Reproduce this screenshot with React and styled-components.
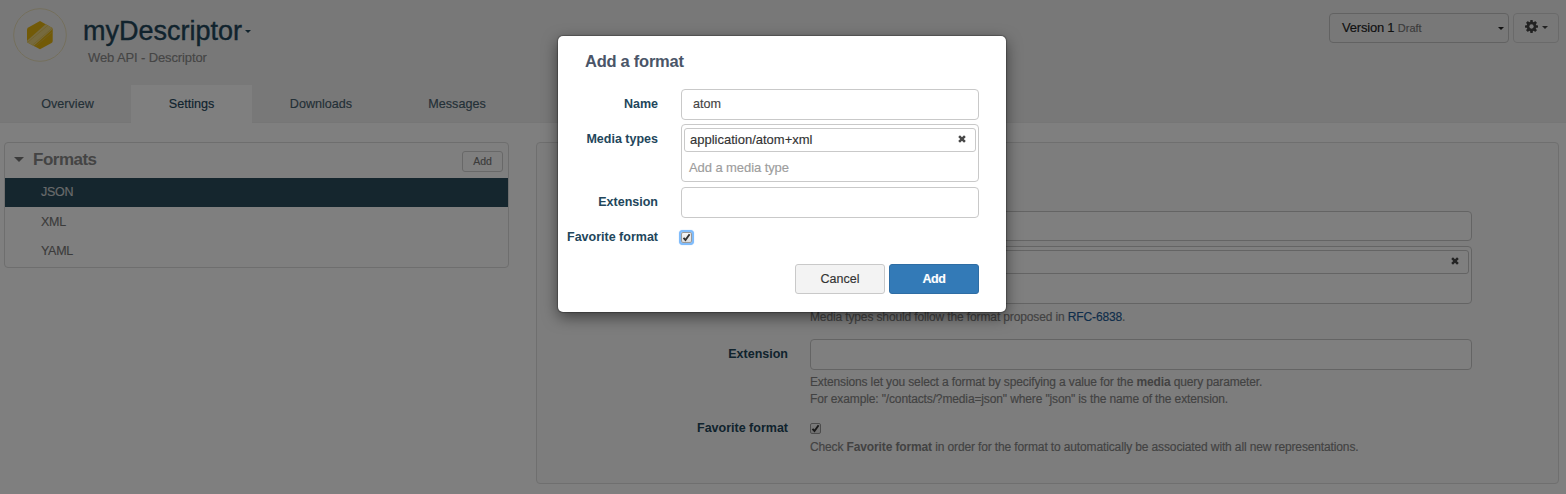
import React from "react";
import styled, { createGlobalStyle, css } from "styled-components";

const GlobalStyle = createGlobalStyle`
  *, *::before, *::after { box-sizing: border-box; }
  html, body { margin: 0; padding: 0; }
  body {
    width: 100%;
    height: 494px;
    overflow: hidden;
    background: #fff;
    color: #333;
    font-family: "Liberation Sans", Arial, sans-serif;
    font-size: 13px;
    line-height: 17px;
    -webkit-text-stroke: 0.15px;
  }
  b, h2, h3, label { -webkit-text-stroke: 0; }
  input, button { font-family: inherit; font-size: inherit; }
`;

const Page = styled.div`
  position: relative;
  height: 494px;
  overflow: hidden;
`;

const Header = styled.header`
  display: flex;
  flex-direction: column;
  justify-content: space-between;
  height: 123px;
  background: #f1f1f1;
  box-shadow: inset 0 -1px 0 #ededed;
`;

const HeaderTop = styled.div`
  display: flex;
  justify-content: space-between;
  padding: 8px 7px 0 13px;
`;

const Brand = styled.div`
  display: flex;
  gap: 16px;
`;

const TitleBlock = styled.div`
  padding-top: 7px;
`;

const Title = styled.h1`
  display: flex;
  align-items: center;
  gap: 3px;
  margin: 0;
  color: #22465b;
  font-size: 27px;
  font-weight: 400;
  line-height: 32px;
  -webkit-text-stroke: 0.4px;
`;

const Subtitle = styled.div`
  margin: 2px 0 0 5px;
  color: #8a8a8a;
  letter-spacing: -0.12px;
`;

const Caret = styled.span`
  width: 0;
  height: 0;
  border: ${(p) => p.$size || 3}px solid transparent;
  border-top-color: ${(p) => p.$color || "#222"};
  border-bottom: 0;
`;

const Actions = styled.div`
  display: flex;
  gap: 4px;
  padding-top: 5px;
`;

const VersionSelect = styled.div`
  display: flex;
  align-items: center;
  justify-content: space-between;
  width: 180px;
  height: 30px;
  padding: 0 4px 0 12px;
  border: 1px solid #c4c4c4;
  border-radius: 4px;
  color: #222;
  letter-spacing: -0.2px;
  small { color: #777; font-size: 11px; letter-spacing: 0; }
`;

const GearButton = styled.div`
  display: flex;
  align-items: center;
  gap: 4px;
  width: 46px;
  height: 30px;
  padding: 0 0 1px 11px;
  border: 1px solid #d4d4d4;
  border-radius: 4px;
  svg { margin-top: -2px; }
`;

const Tabs = styled.nav`
  display: flex;
  padding-left: 4px;
`;

const Tab = styled.a`
  width: ${(p) => p.$width}px;
  height: 38px;
  background: ${(p) => (p.$active ? "#fff" : "transparent")};
  color: ${(p) => (p.$active ? "#22465b" : "#47606e")};
  font-size: 12.6px;
  line-height: 39px;
  text-align: center;
`;

const Body = styled.main`
  display: flex;
  align-items: flex-start;
  gap: 27px;
  padding: 19px 7px 0 4px;
`;

const Panel = styled.section`
  width: 505px;
  height: 126px;
  border: 1px solid #dcdcdc;
  border-radius: 4px;
`;

const PanelHeader = styled.div`
  display: flex;
  align-items: center;
  gap: 9px;
  height: 35px;
  padding: 0 5px 2px 9px;
`;

const PanelTitle = styled.h2`
  flex: 1;
  margin: 0;
  color: #888;
  font-size: 17px;
  line-height: 20px;
  letter-spacing: -0.5px;
`;

const SmallButton = styled.button`
  width: 41px;
  height: 21px;
  margin-top: 3px;
  padding: 1px 0 0;
  border: 1px solid #d0d0d0;
  border-radius: 3px;
  background: #fff;
  color: #777;
  font-size: 10.5px;
  line-height: 17px;
`;

const FormatRow = styled.div`
  height: 29px;
  padding-left: 36px;
  background: ${(p) => (p.$selected ? "#2b4c5c" : "transparent")};
  color: ${(p) => (p.$selected ? "#d0d4d6" : "#777")};
  font-size: 12.5px;
  letter-spacing: -0.3px;
  line-height: ${(p) => (p.$selected ? 28 : 30)}px;
`;

const Details = styled.section`
  flex: 1;
  height: 342px;
  padding: 68px 86px 0 0;
  border: 1px solid #dedede;
  border-radius: 4px;
  background: #fafafa;
`;

const Field = styled.div`
  display: grid;
  grid-template-columns: ${(p) => p.$label}px 1fr;
  column-gap: ${(p) => p.$gap}px;
  margin-bottom: ${(p) => p.$after}px;
`;

const Label = styled.label`
  padding-top: ${(p) => p.$top ?? 7}px;
  color: #22465b;
  font-size: 12.5px;
  font-weight: 700;
  text-align: right;
`;

const boxed = css`
  border: 1px solid #c9c9c9;
  border-radius: 4px;
  background: #fff;
`;

const Input = styled.input`
  ${boxed}
  display: block;
  width: 100%;
  height: ${(p) => p.$height || 31}px;
  padding: 0 11px 2px;
  color: #444;
  outline: none;
  font-size: 12.6px;
`;

const TagBox = styled.div`
  ${boxed}
  height: 58px;
  padding: 3px 2px;
`;

const Tag = styled.div`
  ${boxed}
  display: flex;
  align-items: center;
  justify-content: space-between;
  height: 24px;
  padding: 0 9.5px 1px 5px;
  border-radius: 3px;
  color: #333;
  svg { margin-top: -2px; }
`;

const Placeholder = styled.div`
  padding: 7px 5px 0;
  color: #9d9d9d;
  letter-spacing: -0.08px;
`;

const Help = styled.p`
  margin: ${(p) => p.$top ?? 5}px 0 0;
  color: #858585;
  font-size: 12px;
  white-space: nowrap;
  letter-spacing: -0.13px;
  a { color: #1c5a96; }
`;

const CheckFace = styled.span`
  display: block;
  width: 11px;
  height: 11px;
  border: 1px solid #999;
  border-radius: 2px;
  background: linear-gradient(#f6f6f6, #dedede);
  box-shadow: ${(p) => (p.$focused ? "0 0 0 2px #80bcfb, 0 0 1px 2px #80bcfb" : "none")};
  margin: ${(p) => p.$margin};
  svg { display: block; overflow: visible; }
`;

const Backdrop = styled.div`
  position: absolute;
  inset: 0;
  display: flex;
  justify-content: center;
  align-items: flex-start;
  padding: 36px 2px 0 0;
  background: rgba(0, 0, 0, 0.5);
`;

const Dialog = styled.div`
  width: 448px;
  height: 276px;
  padding: 15px 27px 0 0;
  border-radius: 5px;
  background: #fff;
  box-shadow: 0 5px 15px rgba(0, 0, 0, 0.5), 0 0 1px 1px rgba(0, 0, 0, 0.25);
`;

const DialogTitle = styled.h3`
  margin: 0 0 17px 27px;
  color: #4a5568;
  font-size: 16.5px;
  line-height: 21px;
  letter-spacing: -0.26px;
`;

const DialogFooter = styled.div`
  display: flex;
  justify-content: flex-end;
  gap: 4px;
  margin-top: 18px;
`;

const Button = styled.button`
  width: 90px;
  height: 30px;
  padding: 0 0 1px;
  border: 1px solid ${(p) => (p.$primary ? "#2e6da4" : "#c9c9c9")};
  border-radius: 3px;
  background: ${(p) => (p.$primary ? "#337ab7" : "#f3f3f3")};
  color: ${(p) => (p.$primary ? "#fff" : "#333")};
  font-size: 12.5px;
  font-weight: ${(p) => (p.$primary ? 700 : 400)};
  letter-spacing: ${(p) => (p.$primary ? -0.4 : 0)}px;
`;

function Logo() {
  return (
    <svg width="54" height="54" viewBox="0 0 54 54">
      <defs>
        <clipPath id="hex">
          <path d="M27 13 38.5 19.4Q39.7 20.2 39.7 21.5V33Q39.7 34.3 38.5 35L27 41.3 15.3 35Q14 34.3 14 33V21.5Q14 20.2 15.3 19.4Z" />
        </clipPath>
      </defs>
      <circle cx="27" cy="27" r="26.3" fill="none" stroke="#e9dfb9" />
      <g clipPath="url(#hex)">
        <rect x="13" y="12" width="28" height="31" fill="#e5b40f" />
        <path d="M8 38 38 11.5 43 18 15 43Z" fill="#ecd57c" />
        <path d="M12 36.5 42 11.5M15 41 43 17M19 41 43 21" stroke="#e3c04c" strokeWidth=".7" />
      </g>
    </svg>
  );
}

function Gear() {
  return (
    <svg width="13" height="13" viewBox="0 0 12 12">
      <g fill="#444">
        {[0, 45, 90, 135].map((a) => (
          <rect key={a} x="4.8" y="0" width="2.4" height="12" rx=".4" transform={`rotate(${a} 6 6)`} />
        ))}
        <circle cx="6" cy="6" r="4.5" />
      </g>
      <circle cx="6" cy="6" r="2" fill="#f1f1f1" />
    </svg>
  );
}

function Cross() {
  return (
    <svg width="8" height="8" viewBox="0 0 8 8">
      <path d="M1.1 1.1 6.9 6.9M6.9 1.1 1.1 6.9" stroke="#484848" strokeWidth="2.5" />
    </svg>
  );
}

function Checked({ focused, margin }) {
  return (
    <CheckFace $focused={focused} $margin={margin} role="checkbox" aria-checked="true">
      <svg width="9" height="9" viewBox="0 0 9 9">
        <path d="M1.5 4.8 3.5 7 7.6 1.2" fill="none" stroke="#333" strokeWidth="1.9" />
      </svg>
    </CheckFace>
  );
}

const tabs = [
  { name: "Overview", width: 127 },
  { name: "Settings", width: 121, active: true },
  { name: "Downloads", width: 138 },
  { name: "Messages", width: 134 },
];

export default function App() {
  return (
    <Page>
      <GlobalStyle />
      <Header>
        <HeaderTop>
          <Brand>
            <Logo />
            <TitleBlock>
              <Title>
                myDescriptor
                <Caret $color="#22465b" />
              </Title>
              <Subtitle>Web API - Descriptor</Subtitle>
            </TitleBlock>
          </Brand>
          <Actions>
            <VersionSelect>
              <span>
                Version 1 <small>Draft</small>
              </span>
              <Caret />
            </VersionSelect>
            <GearButton>
              <Gear />
              <Caret $color="#444" />
            </GearButton>
          </Actions>
        </HeaderTop>
        <Tabs>
          {tabs.map((t) => (
            <Tab key={t.name} $width={t.width} $active={t.active}>
              {t.name}
            </Tab>
          ))}
        </Tabs>
      </Header>
      <Body>
        <Panel>
          <PanelHeader>
            <Caret $size={5} $color="#777" />
            <PanelTitle>Formats</PanelTitle>
            <SmallButton>Add</SmallButton>
          </PanelHeader>
          <FormatRow $selected>JSON</FormatRow>
          <FormatRow>XML</FormatRow>
          <FormatRow>YAML</FormatRow>
        </Panel>
        <Details>
          <Field $label={251} $gap={22} $after={5}>
            <Label>Name</Label>
            <Input $height={30} readOnly />
          </Field>
          <Field $label={251} $gap={22} $after={13}>
            <Label>Media types</Label>
            <div>
              <TagBox>
                <Tag>
                  <span />
                  <Cross />
                </Tag>
              </TagBox>
              <Help>
                Media types should follow the format proposed in <a>RFC-6838</a>.
              </Help>
            </div>
          </Field>
          <Field $label={251} $gap={22} $after={11}>
            <Label>Extension</Label>
            <div>
              <Input readOnly />
              <Help $top={4}>
                Extensions let you select a format by specifying a value for the <b>media</b> query parameter.
                <br />
                For example: "/contacts/?media=json" where "json" is the name of the extension.
              </Help>
            </div>
          </Field>
          <Field $label={251} $gap={22} $after={0}>
            <Label $top={1}>Favorite format</Label>
            <div>
              <Checked margin="4px 0 0" />
              <Help>
                Check <b>Favorite format</b> in order for the format to automatically be associated with all new
                representations.
              </Help>
            </div>
          </Field>
        </Details>
      </Body>
      <Backdrop>
        <Dialog>
          <DialogTitle>Add a format</DialogTitle>
          <Field $label={100} $gap={23} $after={4}>
            <Label>Name</Label>
            <Input defaultValue="atom" />
          </Field>
          <Field $label={100} $gap={23} $after={5}>
            <Label>Media types</Label>
            <TagBox>
              <Tag>
                application/atom+xml
                <Cross />
              </Tag>
              <Placeholder>Add a media type</Placeholder>
            </TagBox>
          </Field>
          <Field $label={100} $gap={23} $after={10}>
            <Label>Extension</Label>
            <Input readOnly />
          </Field>
          <Field $label={100} $gap={23} $after={0}>
            <Label $top={1}>Favorite format</Label>
            <Checked focused margin="4px 0 0" />
          </Field>
          <DialogFooter>
            <Button>Cancel</Button>
            <Button $primary>Add</Button>
          </DialogFooter>
        </Dialog>
      </Backdrop>
    </Page>
  );
}
